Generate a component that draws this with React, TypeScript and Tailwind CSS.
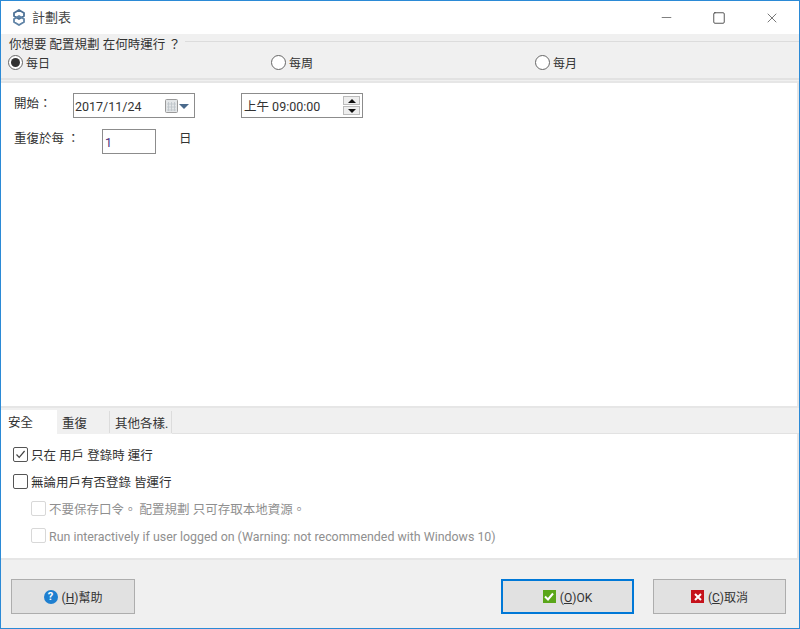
import React from 'react';
import { Minus, Square, X } from 'lucide-react';

const FONT = "font-['Roboto','Noto_Sans_CJK_TC',sans-serif]";

const Radio = ({ label, checked, className }: { label: string; checked?: boolean; className: string }) => (
  <div className={`flex items-center gap-[3px] ${className}`}>
    <span className="flex h-[15px] w-[15px] items-center justify-center rounded-full border border-[#666] bg-white">
      {checked && <span className="h-[9px] w-[9px] rounded-full bg-[#333]" />}
    </span>
    <span className="pt-[3px] text-[12px]">{label}</span>
  </div>
);

const Check = ({ label, checked, disabled, className = '' }: { label: string; checked?: boolean; disabled?: boolean; className?: string }) => (
  <div className={`flex h-[15px] items-center gap-[3px] ${disabled ? 'text-[#8f8f8f]' : 'text-[#333]'} ${className}`}>
    <span className={`flex h-[15px] w-[15px] shrink-0 items-center justify-center rounded-[2px] border ${disabled ? 'border-[#d8d8d8]' : 'border-[#555]'} bg-white`}>
      {checked && (
        <svg width="11" height="11" viewBox="0 0 11 11" fill="none">
          <path d="M1.5 5.5 L4.2 8.4 L9.6 2" stroke="#444" strokeWidth="1.2" />
        </svg>
      )}
    </span>
    <span className="whitespace-nowrap pt-[1px]">{label}</span>
  </div>
);

const AppIcon = () => (
  <svg width="14" height="17" viewBox="0 0 14 17" fill="none">
    <path d="M7 1L12 4V7L7 10L2 7V4Z" stroke="#4d7196" strokeWidth="1.8" />
    <path d="M7 7L12 10V13L7 16L2 13V10Z" stroke="#5f83a6" strokeWidth="1.8" />
  </svg>
);

const CalendarIcon = () => (
  <svg width="25" height="15" viewBox="0 0 25 15" fill="none">
    <rect x="0.5" y="0.5" width="12" height="13" rx="1" fill="#e3e6e8" stroke="#9a9a9a" />
    <path d="M3.5 3v9M6.5 3v9M9.5 3v9M2 5h9M2 8h9M2 11h9" stroke="#bcc3c8" strokeWidth="0.8" />
    <path d="M14 5h10l-5 5z" fill="#4a6a8c" />
  </svg>
);

const FootButton = ({ icon, mnemonic, label, focused, className }: { icon: React.ReactNode; mnemonic: string; label: string; focused?: boolean; className: string }) => (
  <div className={`flex h-[35px] items-center justify-center gap-[4px] bg-[#e1e1e1] text-[12px] text-[#333] ${focused ? 'border-2 border-[#0078d7]' : 'border border-[#adadad]'} ${className}`}>
    {icon}
    <span className="pt-[3px]">(<span className="underline">{mnemonic}</span>){label}</span>
  </div>
);

export default function App() {
  return (
    <div className={`flex h-[629px] w-[800px] flex-col overflow-hidden border border-[#2b8ad6] bg-[#f0f0f0] text-[12.5px] leading-[15px] text-[#333] ${FONT}`}>
      {/* Title bar */}
      <div className="flex h-[33px] shrink-0 items-center bg-white pl-[11px]">
        <AppIcon />
        <span className="ml-[6px] text-[13px] text-[#444]">計劃表</span>
        <div className="ml-auto flex items-center gap-[38px] pr-[19px] text-[#333]">
          <Minus size={15} strokeWidth={1} />
          <Square size={14} strokeWidth={1.4} />
          <X size={16} strokeWidth={1} />
        </div>
      </div>

      {/* Schedule type */}
      <div className="flex h-[46px] shrink-0 flex-col border-b-2 border-[#e2e2e2]">
        <div className="flex h-[18px] items-center">
          <span className="mt-[2px] pl-[8px] pr-[4px]">你想要 配置規劃 在何時運行 ？</span>
          <span className="mb-[4px] h-[1px] flex-1 bg-[#dcdcdc]" />
        </div>
        <div className="mt-[3px] flex h-[15px]">
          <Radio label="每日" checked className="ml-[7px] w-[263px]" />
          <Radio label="每周" className="w-[264px]" />
          <Radio label="每月" className="" />
        </div>
      </div>

      {/* Schedule detail */}
      <div className="mt-[1px] flex-1 border-2 border-l-0 border-[#e6e6e6] bg-white pl-[13px] pt-[10px]">
        <div className="flex items-start">
          <span className="w-[59px] pt-[3px]">開始：</span>
          <div className="flex h-[25px] w-[122px] items-center justify-between border border-[#8c8c8c] pl-[1px] pr-[4px] pt-[1px]">
            2017/11/24
            <CalendarIcon />
          </div>
          <div className="ml-[46px] flex h-[25px] w-[122px] items-center justify-between border border-[#8c8c8c] pl-[2px] pr-[2px]">
            <span className="pt-[1px]">上午 09:00:00</span>
            <div className="flex h-[19px] w-[17px] flex-col gap-[1px]">
              <span className="flex flex-1 items-center justify-center border border-[#bbb] bg-[#eee]">
                <svg width="8" height="4" viewBox="0 0 8 4"><path d="M4 0L8 4H0z" fill="#111" /></svg>
              </span>
              <span className="flex flex-1 items-center justify-center border border-[#bbb] bg-[#eee]">
                <svg width="8" height="4" viewBox="0 0 8 4"><path d="M0 0H8L4 4z" fill="#111" /></svg>
              </span>
            </div>
          </div>
        </div>
        <div className="mt-[11px] flex items-start">
          <span className="w-[88px] pt-[2px]">重復於每 ：</span>
          <div className="flex h-[25px] w-[54px] items-center border border-[#8c8c8c] pl-[2px] pt-[1px] text-[#4b2c7a]">1</div>
          <span className="ml-[23px] pt-[2px]">日</span>
        </div>
      </div>

      {/* Tabs */}
      <div className="flex h-[26px] shrink-0 items-end">
        <div className="flex h-[24px] w-[56px] items-center bg-white pl-[7px]">安全</div>
        <div className="mb-[1px] flex h-[22px] w-[53px] items-center border-r border-[#dcdcdc] pl-[5px] pt-[2px]">重復</div>
        <div className="mb-[1px] flex h-[22px] w-[62px] items-center border-r border-[#dcdcdc] pl-[5px] pt-[2px]">其他各樣.</div>
        <div className="h-[1px] flex-1 bg-[#e2e2e2]" />
      </div>
      <div className="flex h-[126px] shrink-0 flex-col border-b-2 border-r-2 border-[#e6e6e6] bg-white pl-[12px] pt-[13px]">
        <Check label="只在 用戶 登錄時 運行" checked />
        <Check label="無論用戶有否登錄 皆運行" className="mt-[12px]" />
        <Check label="不要保存口令。 配置規劃 只可存取本地資源。" disabled className="ml-[18px] mt-[12px]" />
        <Check label="Run interactively if user logged on (Warning: not recommended with Windows 10)" disabled className="ml-[18px] mt-[12px] text-[12.4px]" />
      </div>

      {/* Footer */}
      <div className="flex h-[68px] shrink-0 items-start pt-[19px]">
        <FootButton
          className="ml-[10px] w-[124px]"
          mnemonic="H"
          label="幫助"
          icon={
            <span className="flex h-[14px] w-[14px] items-center justify-center rounded-full bg-[#1e7fd0] text-[11px] font-bold leading-none text-white">?</span>
          }
        />
        <FootButton
          focused
          className="ml-auto w-[133px]"
          mnemonic="O"
          label="OK"
          icon={
            <span className="flex h-[13px] w-[13px] items-center justify-center bg-[#5aa61a]">
              <svg width="10" height="9" viewBox="0 0 10 9" fill="none"><path d="M1 4.5L4 7.5L9 1.5" stroke="white" strokeWidth="2" /></svg>
            </span>
          }
        />
        <FootButton
          className="ml-[19px] mr-[13px] w-[133px]"
          mnemonic="C"
          label="取消"
          icon={
            <span className="flex h-[13px] w-[13px] items-center justify-center bg-[#c5121b]">
              <svg width="8" height="8" viewBox="0 0 8 8" fill="none"><path d="M1 1L7 7M7 1L1 7" stroke="white" strokeWidth="2" /></svg>
            </span>
          }
        />
      </div>
    </div>
  );
}
